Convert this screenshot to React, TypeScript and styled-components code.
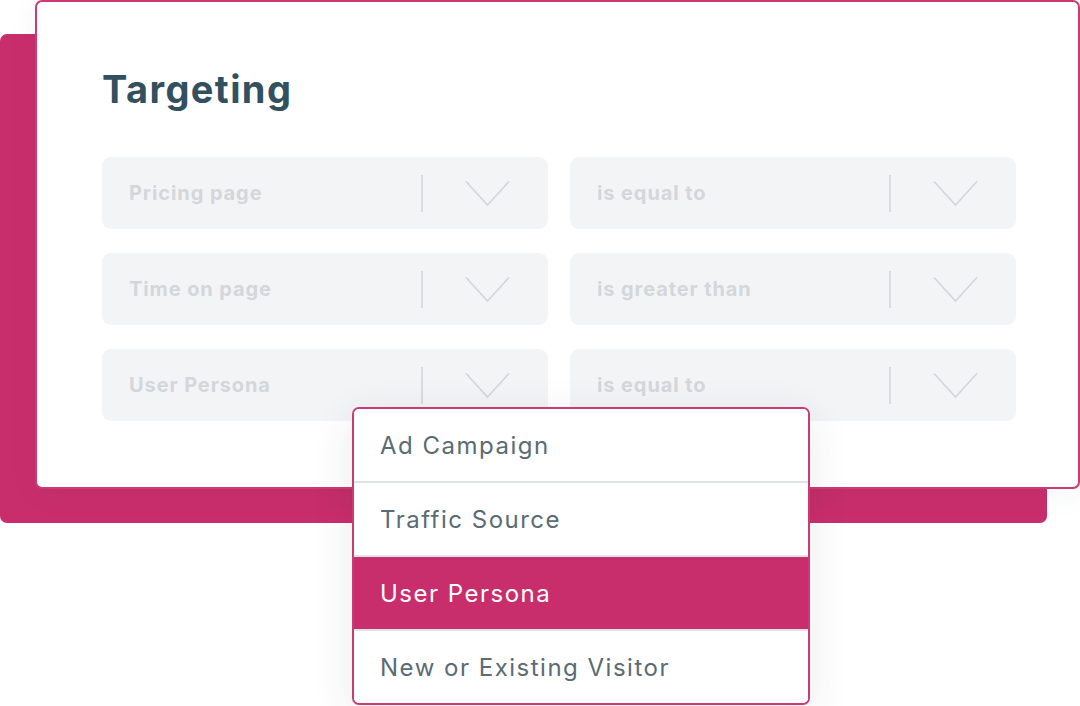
import React from "react";
import styled, { createGlobalStyle } from "styled-components";

const pink = "#c92e6c";

const GlobalStyle = createGlobalStyle`
  html, body {
    margin: 0;
    padding: 0;
    background: #ffffff;
    overflow: hidden;
  }
  body {
    font-family: Inter, "Noto Sans", sans-serif;
    -webkit-font-smoothing: antialiased;
  }
`;

const Stage = styled.div`
  position: relative;
  z-index: 0;
  width: 1080px;
  height: 706px;
`;

const Card = styled.section`
  position: relative;
  box-sizing: border-box;
  margin-left: 35px;
  width: 1045px;
  height: 489px;
  padding: 66px 0 0 65px;
  background: #ffffff;
  border: 2px solid #cc3a74;
  border-radius: 7px;
  box-shadow: 0 6px 30px rgba(40, 50, 60, 0.05);

  &::before {
    content: "";
    position: absolute;
    z-index: -1;
    left: -37px;
    top: 32px;
    right: 31px;
    bottom: -36px;
    background: ${pink};
    border-radius: 7px;
  }
`;

const Title = styled.h1`
  margin: 0 0 47px;
  font-size: 38px;
  line-height: 42px;
  font-weight: 700;
  color: #33505f;
  letter-spacing: 1.4px;
`;

const Grid = styled.div`
  display: grid;
  grid-template-columns: 446px 446px;
  grid-auto-rows: 72px;
  column-gap: 22px;
  row-gap: 24px;
`;

const Select = styled.div`
  display: flex;
  align-items: center;
  padding: 0 38px 0 27px;
  background: #f3f4f6;
  border-radius: 9px;
`;

const SelectLabel = styled.span`
  flex: 1;
  font-size: 20px;
  font-weight: 700;
  color: #d3d7db;
  letter-spacing: 0.9px;
`;

const Divider = styled.span`
  width: 2px;
  height: 37px;
  background: #d9dce0;
  margin-right: 42px;
`;

const Chevron = () => (
  <svg width="45" height="27" viewBox="0 0 45 27" fill="none">
    <path d="M1 1.5 L22.5 25 L44 1.5" stroke="#d2d6da" strokeWidth="1.6" />
  </svg>
);

const Menu = styled.ul`
  position: absolute;
  left: 352px;
  top: 407px;
  box-sizing: border-box;
  width: 458px;
  margin: 0;
  padding: 0;
  list-style: none;
  background: #ffffff;
  border: 2px solid #cc3a74;
  border-radius: 7px;
  overflow: hidden;
  box-shadow: 0 10px 40px rgba(40, 50, 60, 0.1);
`;

const Option = styled.li<{ $active?: boolean }>`
  display: flex;
  align-items: center;
  height: 72px;
  padding-left: 26px;
  font-size: 24px;
  letter-spacing: 1.5px;
  color: ${(p) => (p.$active ? "#ffffff" : "#5a6b74")};
  background: ${(p) => (p.$active ? pink : "#ffffff")};

  & + & {
    border-top: 2px solid #dfe3e7;
  }
`;

const rows = [
  ["Pricing page", "is equal to"],
  ["Time on page", "is greater than"],
  ["User Persona", "is equal to"],
];

const options = ["Ad Campaign", "Traffic Source", "User Persona", "New or Existing Visitor"];

export default function App() {
  return (
    <Stage>
      <GlobalStyle />
      <Card>
        <Title>Targeting</Title>
        <Grid>
          {rows.flat().map((label, i) => (
            <Select key={i}>
              <SelectLabel>{label}</SelectLabel>
              <Divider />
              <Chevron />
            </Select>
          ))}
        </Grid>
      </Card>
      <Menu>
        {options.map((o) => (
          <Option key={o} $active={o === "User Persona"}>
            {o}
          </Option>
        ))}
      </Menu>
    </Stage>
  );
}
